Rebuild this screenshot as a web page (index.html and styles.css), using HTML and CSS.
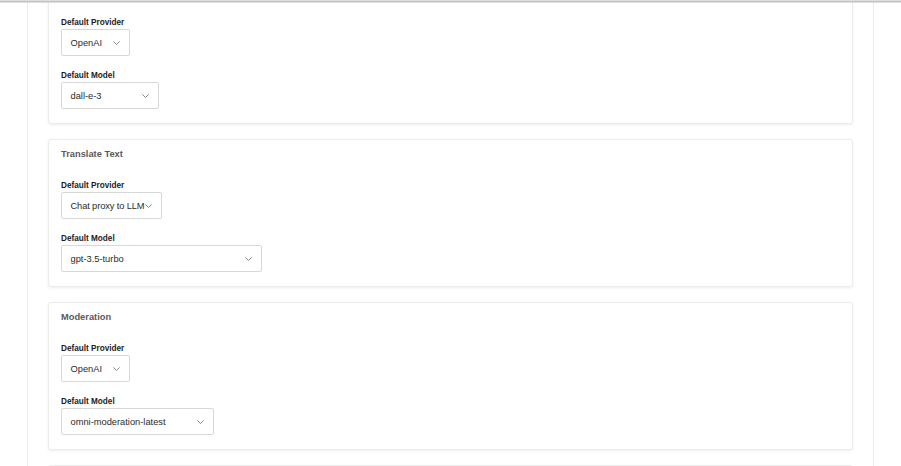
FILE: index.html
```html
<!DOCTYPE html>
<html lang="en">
<head>
<meta charset="utf-8">
<title>AI Settings</title>
<link rel="stylesheet" href="styles.css">
</head>
<body>
<div class="topbar"></div>
<div class="layout">
  <div class="gutter"></div>
  <main class="main">
    <section class="card card-cut">
      <div class="field">
        <div class="label">Default Provider</div>
        <div class="select w-openai"><span class="select-text">OpenAI</span><svg class="chev" viewBox="0 0 7 4" width="7" height="4"><path d="M0.4 0.4 L3.5 3.5 L6.6 0.4"/></svg></div>
      </div>
      <div class="field">
        <div class="label">Default Model</div>
        <div class="select w-dalle"><span class="select-text">dall-e-3</span><svg class="chev" viewBox="0 0 7 4" width="7" height="4"><path d="M0.4 0.4 L3.5 3.5 L6.6 0.4"/></svg></div>
      </div>
    </section>
    <section class="card">
      <h3 class="card-title">Translate Text</h3>
      <div class="field">
        <div class="label">Default Provider</div>
        <div class="select w-chat"><span class="select-text tight">Chat proxy to LLM</span><svg class="chev" viewBox="0 0 7 4" width="7" height="4"><path d="M0.4 0.4 L3.5 3.5 L6.6 0.4"/></svg></div>
      </div>
      <div class="field">
        <div class="label">Default Model</div>
        <div class="select w-gpt"><span class="select-text">gpt-3.5-turbo</span><svg class="chev" viewBox="0 0 7 4" width="7" height="4"><path d="M0.4 0.4 L3.5 3.5 L6.6 0.4"/></svg></div>
      </div>
    </section>
    <section class="card">
      <h3 class="card-title">Moderation</h3>
      <div class="field">
        <div class="label">Default Provider</div>
        <div class="select w-openai"><span class="select-text">OpenAI</span><svg class="chev" viewBox="0 0 7 4" width="7" height="4"><path d="M0.4 0.4 L3.5 3.5 L6.6 0.4"/></svg></div>
      </div>
      <div class="field">
        <div class="label">Default Model</div>
        <div class="select w-omni"><span class="select-text">omni-moderation-latest</span><svg class="chev" viewBox="0 0 7 4" width="7" height="4"><path d="M0.4 0.4 L3.5 3.5 L6.6 0.4"/></svg></div>
      </div>
    </section>
    <section class="card card-empty"></section>
  </main>
</div>
</body>
</html>
```
FILE: styles.css
```css
html, body {
  margin: 0;
  padding: 0;
  height: 100%;
  overflow: hidden;
  background: #ffffff;
}

body {
  font-family: "Liberation Sans", Arial, Helvetica, sans-serif;
  color: #222;
}

.topbar {
  position: fixed;
  top: 0;
  left: 0;
  right: 0;
  height: 3px;
  background: linear-gradient(#ececec 0, #c2c2c2 45%, #d4d4d4 75%, #eeeeee 100%);
  z-index: 10;
}

.layout {
  display: flex;
  margin-top: -24px;
}

.gutter {
  width: 27px;
  flex-shrink: 0;
}

.main {
  width: 805px;
  padding: 0 20px 40px 20px;
  border-left: 1px solid #ededed;
  border-right: 1px solid #ededed;
  display: flex;
  flex-direction: column;
  gap: 15px;
}

.card {
  border: 1px solid #ececec;
  border-radius: 3px;
  box-shadow: 0 1px 3px rgba(0, 0, 0, 0.07);
  padding: 8px 12px 14px 12px;
  background: #fff;
  display: flex;
  flex-direction: column;
  gap: 13px;
}

.card-cut {
  padding-top: 39px;
}

.card-empty {
  height: 120px;
}

.card-title {
  margin: 0 0 6px 0;
  font-size: 9.3px;
  line-height: 12px;
  font-weight: 700;
  color: #5a5a5a;
}

.field {
  display: flex;
  flex-direction: column;
}

.label {
  font-size: 8.2px;
  line-height: 13px;
  font-weight: 700;
  color: #1c1c1c;
}

.select {
  box-sizing: border-box;
  height: 27px;
  display: flex;
  align-items: center;
  padding: 0 9px 0 8.5px;
  border: 1px solid #d8d8d8;
  border-radius: 2px;
  background: #fff;
  font-size: 9.3px;
  color: #2b2b2b;
}

.select-text {
  flex: 1;
  min-width: 0;
  white-space: nowrap;
}

.tight {
  letter-spacing: -0.12px;
}

.chev {
  flex-shrink: 0;
  fill: none;
  stroke: #6a6a6a;
  stroke-width: 0.8;
}

.w-openai { width: 69px; }
.w-dalle { width: 98px; }
.w-chat { width: 101px; }
.w-gpt { width: 201px; }
.w-omni { width: 153px; }
```
